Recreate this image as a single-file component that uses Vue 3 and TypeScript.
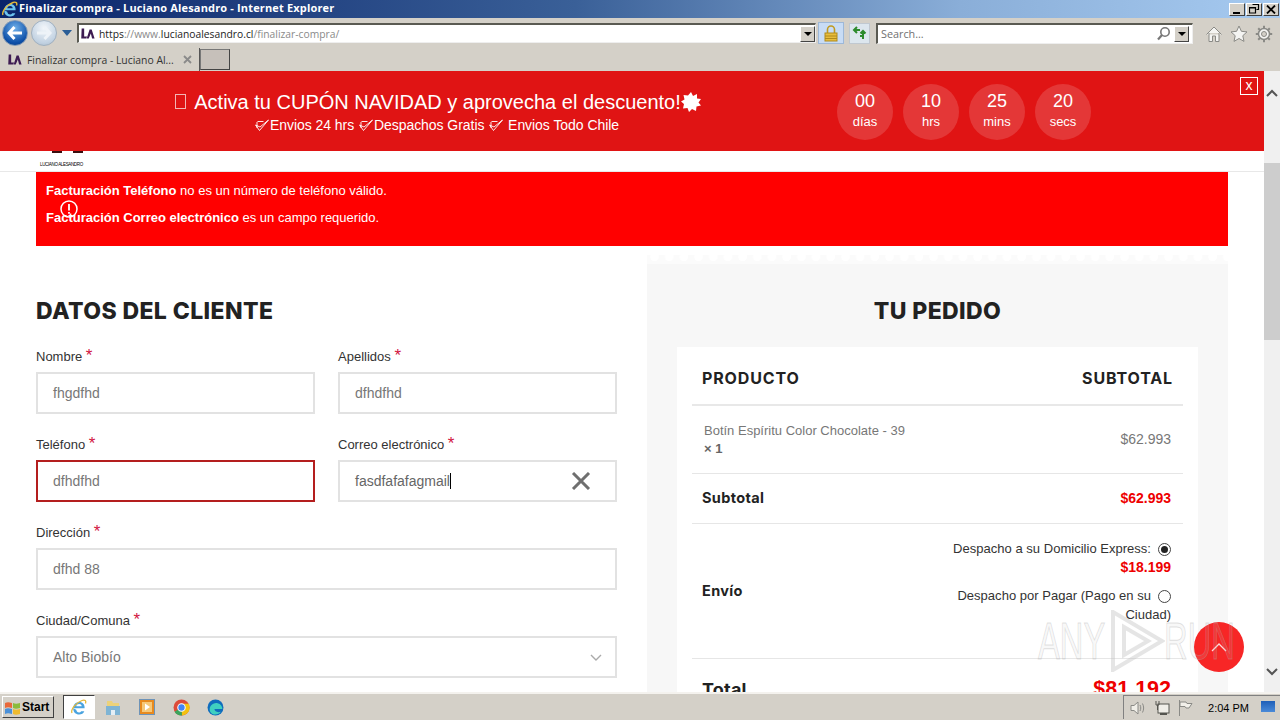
<script setup lang="ts">
interface Circle { value: string; unit: string }
const circles: Circle[] = [
  { value: '00', unit: 'días' },
  { value: '10', unit: 'hrs' },
  { value: '25', unit: 'mins' },
  { value: '20', unit: 'secs' },
]
</script>

<template>
  <div class="screen">
    <header class="titlebar">
      <svg class="ie-small" width="18" height="18" viewBox="0 0 18 18"><path d="M3 10.200h11.600c.3-3.700-2-6.200-5.300-6.200-3.500 0-6.100 2.800-6.100 6.500s2.500 6 5.900 6c2.500 0 4.400-1.200 5.200-3.300h-3.100c-.5 .8-1.200 1.200-2.100 1.200-1.700 0-2.700-1.200-2.800-2.700M6.300 8.200c.2-1.400 1.300-2.200 2.800-2.200s2.500 .9 2.600 2.200z" fill="#6cc4f0" fill-rule="evenodd"/><path d="M2 15c-1.500-3 3-10 10-12.500 3-1 4.500 .3 3.500 3" fill="none" stroke="#e5b93a" stroke-width="1.400"/></svg>
      <span class="title-text">Finalizar compra - Luciano Alesandro - Internet Explorer</span>
      <div class="win-buttons">
        <span class="win-btn"><i class="min-glyph"></i></span>
        <span class="win-btn"><svg width="11" height="10" viewBox="0 0 11 10"><path d="M3.500 .5h6v5h-2M.5 3.500h6v5.500h-6zM.5 4h6" fill="none" stroke="#000" stroke-width="1.200"/></svg></span>
        <span class="win-btn"><svg width="10" height="9" viewBox="0 0 10 9"><path d="M1 .5l8 8M9 .5l-8 8" stroke="#000" stroke-width="1.800"/></svg></span>
      </div>
    </header>

    <div class="navbar">
      <span class="nav-circle back">
        <svg width="16" height="14" viewBox="0 0 16 14"><path d="M7.500 1L2 7l5.500 6M2.500 7H15" fill="none" stroke="#fff" stroke-width="3"/></svg>
      </span>
      <span class="nav-circle forward">
        <svg width="16" height="14" viewBox="0 0 16 14"><path d="M8.500 1L14 7l-5.500 6M13 7H1" fill="none" stroke="#eef3f8" stroke-width="3"/></svg>
      </span>
      <i class="nav-drop"></i>
      <div class="address">
        <svg class="la-logo" width="15" height="12" viewBox="0 0 18 13"><path d="M2 0h3v9.500h3.500L7.500 12H1.500zM11.500 1h2.500l3.500 11h-3l-1.500-6-2.500 6h-2.500z" fill="#3d1b52"/></svg>
        <span class="url"><b>https</b>://www.<b>lucianoalesandro.cl</b>/finalizar-compra/</span>
        <span class="combo"><i></i></span>
      </div>
      <span class="lock-btn">
        <svg width="14" height="17" viewBox="0 0 14 17"><path d="M3.500 8V4.500a3.500 3.500 0 0 1 7 0V8" fill="none" stroke="#c09a20" stroke-width="1.600"/><rect x="1" y="8" width="12" height="8" fill="#e8bd3c" stroke="#b08a1c"/><path d="M1 11h12M1 13.500h12" stroke="#b08a1c"/></svg>
      </span>
      <span class="refresh-btn">
        <svg width="16" height="14" viewBox="0 0 16 14"><path d="M8 4H2.500M5 1L2 4l3 3" fill="none" stroke="#2c8a2c" stroke-width="2"/><path d="M8 10h3V5M8.500 7.500L11 5l2.500 2.500M11 5v8" fill="none" stroke="#2c8a2c" stroke-width="2"/></svg>
      </span>
      <div class="search">
        <span class="search-text">Search...</span>
        <svg width="15" height="15" viewBox="0 0 15 15"><circle cx="9" cy="6" r="4.200" fill="none" stroke="#777" stroke-width="1.600"/><path d="M6 9l-4 4.500" stroke="#777" stroke-width="2.200"/></svg>
        <span class="combo"><i></i></span>
      </div>
      <div class="tools">
        <svg width="18" height="18" viewBox="0 0 18 18"><path d="M1.500 9.500L9 2l7.500 7.500M4 8v8.500h3.500V11h3v5.500H14V8" fill="#f4f4f2" stroke="#8a8a86"/></svg>
        <svg width="18" height="18" viewBox="0 0 18 18"><path d="M9 1l2.400 5.300 5.600 .6-4.200 3.800 1.200 5.700L9 13.500l-5 2.900 1.200-5.700L1 6.900l5.600-.6z" fill="#f4f4f2" stroke="#8a8a86"/></svg>
        <svg width="18" height="18" viewBox="0 0 18 18"><circle cx="9" cy="9" r="5.500" fill="#f4f4f2" stroke="#8a8a86" stroke-width="1.500"/><circle cx="9" cy="9" r="2.500" fill="#d4d0c8" stroke="#8a8a86"/><path d="M9 .8v3M9 14.200v3M.8 9h3M14.200 9h3M3.200 3.200l2 2M12.800 12.800l2 2M14.800 3.200l-2 2M5.200 12.800l-2 2" stroke="#8a8a86" stroke-width="2"/></svg>
      </div>
    </div>

    <div class="tabbar">
      <div class="tab">
        <svg class="la-logo" width="15" height="12" viewBox="0 0 18 13"><path d="M2 0h3v9.500h3.500L7.500 12H1.500zM11.500 1h2.500l3.500 11h-3l-1.500-6-2.500 6h-2.500z" fill="#3d1b52"/></svg>
        <span class="tab-text">Finalizar compra - Luciano Al...</span>
        <svg width="9" height="9" viewBox="0 0 9 9"><path d="M1 1l7 7M8 1l-7 7" stroke="#8a8a8a" stroke-width="1.800"/></svg>
      </div>
      <span class="new-tab"></span>
    </div>

    <div class="viewport">
      <main class="page">
        <section class="promo">
          <div class="promo-text">
            <div class="promo-title"><i class="tofu"></i> Activa tu CUPÓN NAVIDAD y aprovecha el descuento!<svg class="burst" width="20" height="20" viewBox="0 0 20 20"><path d="M10 0l2 4 4-2 0 4.500 4 .5-2.500 3.500 2.500 3-4.500 1-.5 4.500-4-2-3 3-1.500-4-4.500 .5 1-4.500L0 9.500l3.500-2L2.500 3l4.500 .5z" fill="#fff"/></svg></div>
            <div class="promo-sub">
              <svg class="check" width="16" height="13" viewBox="0 0 15 13"><path d="M1 6l4 5.500L14 1 5.500 8zM3 2.500h6M2.500 3v6" fill="none" stroke="#fff" stroke-width=".9"/></svg>Envios 24 hrs
              <svg class="check" width="16" height="13" viewBox="0 0 15 13"><path d="M1 6l4 5.500L14 1 5.500 8zM3 2.500h6M2.500 3v6" fill="none" stroke="#fff" stroke-width=".9"/></svg>Despachos Gratis
              <svg class="check" width="16" height="13" viewBox="0 0 15 13"><path d="M1 6l4 5.500L14 1 5.500 8zM3 2.500h6M2.500 3v6" fill="none" stroke="#fff" stroke-width=".9"/></svg> Envios Todo Chile
            </div>
          </div>
          <div class="countdown">
            <div v-for="c in circles" :key="c.unit" class="circle">
              <span class="c-val">{{ c.value }}</span>
              <span class="c-unit">{{ c.unit }}</span>
            </div>
          </div>
          <span class="promo-close">x</span>
        </section>

        <div class="site-header">
          <div class="logo-crop">
            <i></i><i></i>
            <span>LUCIANO ALESANDRO</span>
          </div>
        </div>

        <div class="content">
          <div class="error-box">
            <p><b>Facturación Teléfono</b> no es un número de teléfono válido.</p>
            <p><b>Facturación Correo electrónico</b> es un campo requerido.</p>
            <svg class="err-icon" width="18" height="18" viewBox="0 0 18 18"><circle cx="9" cy="9" r="8" fill="none" stroke="#fff" stroke-width="1.500"/><path d="M9 4v6.500M9 12v1.800" stroke="#fff" stroke-width="1.800"/></svg>
          </div>

          <div class="columns">
            <section class="customer">
              <h2>DATOS DEL CLIENTE</h2>
              <div class="two">
                <label class="field"><span class="lbl">Nombre <em>*</em></span><span class="input">fhgdfhd</span></label>
                <label class="field"><span class="lbl">Apellidos <em>*</em></span><span class="input">dfhdfhd</span></label>
              </div>
              <div class="two">
                <label class="field"><span class="lbl">Teléfono <em>*</em></span><span class="input invalid">dfhdfhd</span></label>
                <label class="field">
                  <span class="lbl">Correo electrónico <em>*</em></span>
                  <span class="input focus"><span class="typed">fasdfafafagmail</span>
                    <svg width="20" height="18" viewBox="0 0 20 18"><path d="M2 1l16 16M18 1L2 17" stroke="#6f6f6f" stroke-width="3"/></svg>
                  </span>
                </label>
              </div>
              <label class="field"><span class="lbl">Dirección <em>*</em></span><span class="input">dfhd 88</span></label>
              <label class="field"><span class="lbl">Ciudad/Comuna <em>*</em></span>
                <span class="input select">Alto Biobío
                  <svg width="12" height="7" viewBox="0 0 12 7"><path d="M1 1l5 5 5-5" fill="none" stroke="#aaa" stroke-width="1.400"/></svg>
                </span>
              </label>
            </section>

            <section class="order">
              <div class="scallop"></div>
              <div class="order-inner">
                <h2>TU PEDIDO</h2>
                <div class="card">
                  <div class="row head"><span>PRODUCTO</span><span>SUBTOTAL</span></div>
                  <div class="row product">
                    <span class="pname">Botín Espíritu Color Chocolate - 39<br /><b>× 1</b></span>
                    <span class="pprice">$62.993</span>
                  </div>
                  <div class="row subtotal"><b>Subtotal</b><b class="red">$62.993</b></div>
                  <div class="row shipping">
                    <b>Envío</b>
                    <div class="ship-opts">
                      <div class="opt">
                        <div class="opt-line">Despacho a su Domicilio Express: <i class="radio on"></i></div>
                        <b class="red ship-price">$18.199</b>
                      </div>
                      <div class="opt second">
                        <div class="opt-line">Despacho por Pagar (Pago en su <i class="radio"></i></div>
                        <div class="opt-wrap">Ciudad)</div>
                      </div>
                    </div>
                  </div>
                  <div class="row total"><b>Total</b><b class="red big">$81.192</b></div>
                </div>
              </div>
            </section>
          </div>
        </div>

        <button class="to-top" type="button">
          <svg width="16" height="9" viewBox="0 0 16 9"><path d="M1 8l7-7 7 7" fill="none" stroke="#ffd9d9" stroke-width="1.300"/></svg>
        </button>

        <div class="watermark">
          <span>ANY</span>
          <svg width="55" height="62" viewBox="0 0 55 62"><path d="M3 2v58l49-29zM14 17v28l24-14z" fill="none" stroke="rgba(190,190,190,.4)" stroke-width="4"/></svg>
          <span>RUN</span>
        </div>
      </main>

      <aside class="scrollbar">
        <svg width="12" height="8" viewBox="0 0 12 8"><path d="M1 7l5-5 5 5" fill="none" stroke="#555" stroke-width="2"/></svg>
        <div class="track"><div class="thumb"></div></div>
        <svg width="12" height="8" viewBox="0 0 12 8"><path d="M1 1l5 5 5-5" fill="none" stroke="#555" stroke-width="2"/></svg>
      </aside>
    </div>

    <footer class="taskbar">
      <span class="start">
        <svg width="17" height="15" viewBox="0 0 17 15"><path d="M1 3c2-1 4-1 7 0v5c-3-1-5-1-7 0z" fill="#e8683a"/><path d="M9 3c2 1 4 1 7 0v5c-3 1-5 1-7 0z" fill="#8bbb3c"/><path d="M1 9c2-1 4-1 7 0v5c-3-1-5-1-7 0z" fill="#4a90d8"/><path d="M9 9c2 1 4 1 7 0v5c-3 1-5 1-7 0z" fill="#eebb30"/></svg>
        Start
      </span>
      <span class="task-ie">
        <svg width="18" height="18" viewBox="0 0 18 18"><path d="M3 10.200h11.600c.3-3.700-2-6.200-5.300-6.200-3.500 0-6.100 2.800-6.100 6.500s2.500 6 5.900 6c2.500 0 4.400-1.200 5.200-3.300h-3.100c-.5 .8-1.200 1.200-2.100 1.200-1.700 0-2.700-1.200-2.800-2.700M6.300 8.200c.2-1.400 1.300-2.200 2.800-2.200s2.500 .9 2.600 2.200z" fill="#4aa3df" fill-rule="evenodd"/><path d="M2 15c-1.500-3 3-10 10-12.500 3-1 4.500 .3 3.500 3" fill="none" stroke="#e5b93a" stroke-width="1.300"/></svg>
      </span>
      <span class="task-icon first">
        <svg width="16" height="17" viewBox="0 0 16 17"><path d="M2 2h5l1 2h6v5H2z" fill="#ecd27a"/><path d="M1 7h14v9H1z" fill="#7fb4d4"/><path d="M6 16v-5h4v5z" fill="#e4eef5"/></svg>
      </span>
      <span class="task-icon">
        <svg width="16" height="16" viewBox="0 0 16 16"><rect x=".5" y=".5" width="15" height="15" fill="#e88a1e" stroke="#6d93b8"/><rect x="3" y="3" width="10" height="10" fill="#f6c878"/><path d="M6 4.500l5 3.500-5 3.500z" fill="#fff"/></svg>
      </span>
      <span class="task-icon">
        <svg width="17" height="17" viewBox="0 0 16 16"><circle cx="8" cy="8" r="7.500" fill="#dd4b39"/><path d="M8 8L1.500 12a7.500 7.500 0 0 0 7 3.500z" fill="#3ba55c"/><path d="M8 4.500h6.800A7.500 7.500 0 0 1 8.500 15.500z" fill="#f4c20d"/><circle cx="8" cy="8" r="3.500" fill="#4285f4" stroke="#fff"/></svg>
      </span>
      <span class="task-icon">
        <svg width="17" height="17" viewBox="0 0 16 16"><circle cx="8" cy="8" r="7.500" fill="#0f6cbd"/><path d="M3 12c-2-5 3-9 7-8 3 .7 4.500 3 4.500 5.500H7c.2 2.500 3 3.500 6 2.500-2 3-7.500 4-10 0z" fill="#3fd0c0"/></svg>
      </span>
      <div class="tray">
        <svg width="18" height="16" viewBox="0 0 18 16"><path d="M2 5.500h3L9 2v12l-4-3.500H2z" fill="#f0eee8" stroke="#8a8a86"/><path d="M11 5c1 2 1 4 0 6M13.500 3.500c1.500 3 1.500 6 0 9" fill="none" stroke="#8a8a86"/></svg>
        <svg width="16" height="16" viewBox="0 0 16 16"><rect x="4" y="4" width="11" height="9" fill="#f0eee8" stroke="#55554f"/><rect x="6" y="13" width="7" height="2" fill="#55554f"/><path d="M2 1v4h3V1M3.500 5v5" fill="none" stroke="#55554f"/></svg>
        <svg width="16" height="16" viewBox="0 0 16 16"><path d="M2.500 0v16" stroke="#8a8a86"/><path d="M3 2h6l1 1.500h5L12 8H9L8 6.500H3z" fill="#f2f0ea" stroke="#8a8a86"/></svg>
        <span class="clock">2:04 PM</span>
      </div>
      <span class="show-desktop"></span>
    </footer>
  </div>
</template>

<style>
html, body { margin: 0; padding: 0; }
</style>

<style scoped>
.screen {
  width: 1280px; height: 720px; overflow: hidden; display: flex; flex-direction: column;
  background: #d4d0c8; font-family: "Liberation Sans", Arial, sans-serif;
}
.titlebar {
  height: 18px; flex: none; display: flex; align-items: center; position: relative;
  background: linear-gradient(90deg, #0a246a 0%, #3a6098 45%, #8aaed8 75%, #a6caf0 100%);
  color: #fff; padding-left: 1px;
}
.title-text { font: 700 11px/16px "Open Sans", sans-serif; letter-spacing: .16px; margin-top: -2px; }
.win-buttons { margin-left: auto; display: flex; gap: 1px; padding-right: 1px; }
.win-btn {
  width: 16px; height: 13px; background: #d4d0c8; display: flex; align-items: center; justify-content: center;
  border: 1px solid; border-color: #fff #404040 #404040 #fff; box-sizing: border-box;
}
.min-glyph { width: 7px; height: 2px; background: #000; margin-top: 7px; margin-right: 2px; }

.navbar { height: 30px; flex: none; display: flex; align-items: center; background: #d4d0c8; position: relative; }
.nav-circle {
  width: 26px; height: 26px; border-radius: 50%; display: flex; align-items: center; justify-content: center;
  flex: none; box-sizing: border-box;
}
.back { margin-left: 2px; background: radial-gradient(circle at 50% 30%, #6fb0ea, #0d4fa8 70%, #0a3a80); border: 1px solid #7f98b6; }
.forward { margin-left: 3px; background: radial-gradient(circle at 50% 30%, #f2f6fa, #c2d2e2 70%, #a6b8c8); border: 1px solid #a0b0c0; }
.nav-drop { width: 0; height: 0; border: 5px solid transparent; border-top: 6px solid #2a5d96; border-bottom: 0; margin: 0 5px 0 5px; }
.address {
  width: 739px; height: 20px; background: #fff; box-sizing: border-box; flex: none;
  border-top: 2px solid #5a5a52; border-left: 2px solid #5a5a52; border-right: 1px solid #eee; border-bottom: 1px solid #eee;
  display: flex; align-items: center; padding-left: 1px;
}
.la-logo { flex: none; }
.url { font: 400 10.300px "Open Sans", sans-serif; color: #8a8a8a; margin-left: 4px; }
.url b { font-weight: 400; color: #222; }
.combo {
  margin-left: auto; width: 15px; height: 16px; background: #d4d0c8; box-sizing: border-box; flex: none;
  border: 1px solid; border-color: #fff #444 #444 #fff; display: flex; align-items: center; justify-content: center;
}
.combo i { width: 0; height: 0; border: 4px solid transparent; border-top: 4px solid #000; border-bottom: 0; }
.lock-btn {
  margin-left: 2px; width: 26px; height: 22px; flex: none; background: #c8dcf5; border: 1px solid #9db8d8; box-sizing: border-box;
  display: flex; align-items: center; justify-content: center;
}
.refresh-btn {
  margin-left: 5px; width: 21px; height: 21px; flex: none; background: #dce6ee; border: 1px solid #c0c8d0; box-sizing: border-box;
  display: flex; align-items: center; justify-content: center;
}
.search {
  margin-left: 6px; width: 317px; height: 21px; flex: none; background: #fff; box-sizing: border-box;
  border-top: 2px solid #5a5a52; border-left: 2px solid #5a5a52; border-right: 1px solid #eee; border-bottom: 1px solid #eee;
  display: flex; align-items: center; padding-left: 3px; gap: 3px;
}
.search .combo { margin-left: 0; margin-right: 3px; }
.search svg { margin-left: auto; }
.search-text { font: 400 10.800px "Open Sans", sans-serif; color: #707070; }
.tools { margin-left: 12px; display: flex; gap: 7px; align-items: center; padding-top: 1px; }

.tabbar { height: 23px; flex: none; display: flex; align-items: center; background: #d4d0c8; }
.tab { width: 200px; display: flex; align-items: center; padding-left: 7px; box-sizing: border-box; height: 23px; border-right: 1px solid #555; }
.tab-text { font: 400 10.400px "Open Sans", sans-serif; color: #333; margin-left: 5px; width: 156px; white-space: nowrap; flex: none; }
.new-tab { width: 30px; height: 21px; background: #c6c0ba; border: 1px solid; border-color: #777 #444 #444 #777; box-sizing: border-box; }

.viewport { flex: 1; min-height: 0; display: flex; }
.page { flex: 1; background: #fff; position: relative; overflow: hidden; min-width: 0; }

.promo {
  height: 80px; background: #e01414; color: #fff; display: flex; align-items: center; position: relative;
}
.promo-text { width: 876px; text-align: center; flex: none; margin-top: 1px; }
.promo-title { font-size: 20px; line-height: 26px; height: 26px; display: flex; align-items: center; justify-content: center; }
.tofu { width: 9px; height: 13px; border: 1px solid #f2b5b5; margin-right: 8px; flex: none; }
.promo-sub { font-size: 14px; line-height: 20px; letter-spacing: -.05px; padding-right: 3px; }
.check { vertical-align: -2px; }
.countdown { display: flex; gap: 10px; margin-left: -39px; padding-top: 1px; }
.circle {
  width: 56px; height: 56px; border-radius: 50%; background: rgba(255,255,255,.15); display: flex; flex-direction: column;
  align-items: center; justify-content: center;
}
.c-val { font-size: 18px; line-height: 21px; margin-top: -2px; }
.c-unit { font-size: 13px; line-height: 16px; margin-top: 2px; }
.promo-close {
  position: absolute; right: 6px; top: 6px; width: 18px; height: 18px; border: 1px solid #fff; box-sizing: border-box;
  font-size: 14px; line-height: 15px; text-align: center;
}

.site-header { height: 20px; border-bottom: 1px solid #e8e8e8; position: relative; }
.logo-crop { position: relative; width: 44px; height: 20px; margin-left: 39px; }
.logo-crop i { position: absolute; top: 0; width: 10px; height: 2px; background: #3a0f0f; left: 13px; }
.logo-crop i + i { left: 34px; }
.logo-crop span { position: absolute; left: 1px; top: 11px; font-size: 4.500px; line-height: 6px; white-space: nowrap; color: #000; letter-spacing: -.35px; }

.content { padding: 0 36px; }
.error-box {
  height: 74px; background: #f00; color: #fff; font-size: 13px; padding: 5px 10px 0; box-sizing: border-box; position: relative;
}
.error-box p { margin: 0; line-height: 27px; }
.err-icon { position: absolute; left: 24px; top: 28px; }

.columns { display: flex; gap: 30px; margin-top: 9px; }
.customer { width: 581px; flex: none; display: flex; flex-direction: column; gap: 23px; padding-top: 42px; }
h2 { margin: 0; font: 800 23px/28px Inter, "Liberation Sans", sans-serif; color: #222; letter-spacing: .4px; }
.customer h2 { margin-bottom: 1px; }
.two { display: flex; gap: 23px; }
.field { display: flex; flex-direction: column; flex: 1; min-width: 0; gap: 6px; }
.customer > .field { flex: none; }
.lbl { font-size: 13px; line-height: 16px; height: 17px; color: #333; }
.lbl em { color: #d2153f; font-style: normal; font-size: 17px; line-height: 14px; }
.input {
  height: 42px; box-sizing: border-box; border: 2px solid #e2e2e2; padding: 0 15px; color: #777; font-size: 14px;
  display: flex; align-items: center; background: #fff;
}
.input.invalid { border-color: #b41e1e; }
.focus svg { margin-left: auto; margin-right: 9px; }
.typed { border-right: 1px solid #000; color: #666; }
.select svg { margin-left: auto; margin-right: -2px; }

.order { width: 581px; flex: none; }
.scallop {
  height: 9px;
  background: radial-gradient(circle at 7.500px 2px, #fff 4px, #fbfbfb 4.500px) 0 0 / 14.700px 9px repeat-x;
}
.order-inner { background: #f7f7f7; padding: 33px 30px 0; height: 440px; }
.order h2 { text-align: center; margin-bottom: 22px; }
.card { background: #fff; padding: 0 15px; }
.row { display: flex; justify-content: space-between; align-items: center; box-sizing: border-box; border-bottom: 1px solid #e6e6e6; font-size: 13px; }
.head { height: 59px; font: 700 16px Inter, sans-serif; letter-spacing: .85px; color: #222; padding: 4px 10px 0; border-bottom: 2px solid #e8e8e8; }
.product { height: 68px; padding: 0 12px 2px; color: #777; }
.pname { line-height: 18px; font-size: 13px; margin-top: 2px; }
.pname b { color: #666; }
.pprice { color: #777; font-size: 14px; }
.subtotal { height: 50px; padding: 0 12px 2px 10px; }
.subtotal > b:first-child, .shipping > b, .total > b:first-child { font: 700 14.500px Inter, sans-serif; color: #222; letter-spacing: .35px; }
.red { color: #e00; font-size: 14px; }
.shipping { height: 135px; padding: 0 12px 0 10px; align-items: flex-start; }
.shipping > b { margin-top: 58px; }
.ship-opts { text-align: right; font-size: 13px; color: #333; padding-top: 15px; line-height: 19px; }
.opt-line { display: flex; justify-content: flex-end; align-items: center; gap: 7px; letter-spacing: .02px; }
.ship-price { display: block; }
.second { margin-top: 9px; }
.radio { width: 13px; height: 13px; box-sizing: border-box; border-radius: 50%; border: 1px solid #444; background: #fff; display: inline-block; position: relative; top: 1px; flex: none; }
.radio.on::after { content: ""; position: absolute; left: 2px; top: 2px; width: 7px; height: 7px; background: #222; border-radius: 50%; }
.total { padding: 20px 12px 0 10px; align-items: flex-start; border: 0; height: 60px; }
.total > b:first-child { font-size: 18px; letter-spacing: .2px; }
.big { font-size: 21.500px; margin-top: -2px; }

.to-top {
  position: absolute; left: 1194px; top: 551px; width: 50px; height: 50px; border-radius: 50%; background: #f72626; border: 0;
  display: flex; align-items: center; justify-content: center; padding: 0;
}
.watermark {
  position: absolute; left: 1038px; top: 539px; height: 62px; display: flex; align-items: center; pointer-events: none;
}
.watermark svg { margin: 0 -1px 0 4px; }
.watermark span {
  font-size: 52px; line-height: 62px; color: rgba(200,200,200,.14); -webkit-text-stroke: 1px rgba(170,170,170,.35); width: 68px; white-space: nowrap;
  display: block; transform: scaleX(.63); transform-origin: 0 50%;
}

.scrollbar { width: 16px; flex: none; background: #f0f0f0; display: flex; flex-direction: column; align-items: center; padding: 18px 0 16px; box-sizing: border-box; }
.track { flex: 1; width: 16px; padding-top: 66px; box-sizing: border-box; }
.thumb { height: 177px; background: #cdcdcd; }

.taskbar {
  height: 28px; flex: none; display: flex; align-items: center; background: #d4d0c8; border-top: 2px solid #f4f2ee; box-sizing: border-box; position: relative;
}
.start {
  margin-left: 2px; width: 52px; height: 22px; box-sizing: border-box; border: 1px solid; border-color: #fff #404040 #404040 #fff;
  display: flex; align-items: center; gap: 1px; font: 700 12px "Liberation Sans", sans-serif; color: #000; padding-left: 1px;
}
.task-ie {
  margin-left: 9px; width: 32px; height: 24px; box-sizing: border-box; background: #fff; border: 1px solid; border-color: #404040 #fff #fff #404040;
  display: flex; align-items: center; justify-content: center;
}
.task-icon { width: 34px; display: flex; justify-content: center; flex: none; }
.task-icon.first { margin-left: 1px; }
.tray {
  margin-left: auto; width: 157px; height: 24px; box-sizing: border-box; border-left: 1px solid #808080; border-top: 1px solid #808080;
  display: flex; align-items: center; gap: 7px; padding-left: 5px;
}
.clock { font: 400 11px "Liberation Sans", sans-serif; color: #000; margin-left: auto; margin-right: 31px; }
.show-desktop { position: absolute; right: 5px; top: 7px; width: 14px; height: 11px; background: linear-gradient(180deg, #1f5fb8, #4a8ad8); }
</style>
